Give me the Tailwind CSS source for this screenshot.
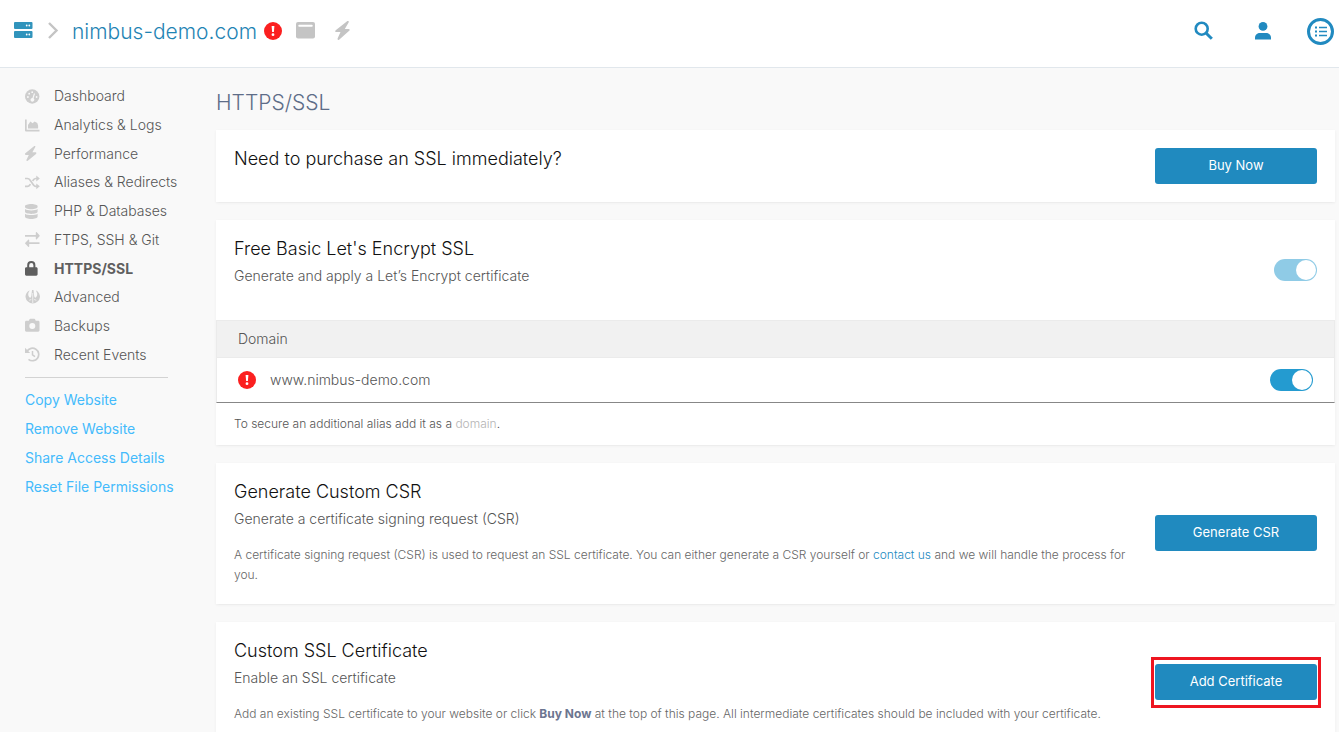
<!DOCTYPE html>
<html lang="en">
<head>
<meta charset="utf-8">
<meta name="viewport" content="width=device-width, initial-scale=1">
<title>HTTPS/SSL - nimbus-demo.com</title>
<script src="https://cdn.jsdelivr.net/npm/@tailwindcss/browser@4"></script>
</head>
<body class="h-screen overflow-y-auto [scrollbar-width:none] bg-[#f9f9f9] font-['Inter',sans-serif] text-sm font-light text-[#555]">
<header class="flex h-[68px] items-center justify-between border-b border-[#e1e7ec] bg-white pb-[6px] pl-[14px] pr-[5px]">
  <div class="flex items-center">
    <a href="#" aria-label="Servers" class="mr-[15px]">
      <svg class="h-[18px] w-[19px]" viewBox="0 0 19 18"><g fill="#3194bc"><rect width="18.500" height="7" rx="1"/><rect y="9" width="18.500" height="7" rx="1"/></g><g fill="#fff"><circle cx="12.700" cy="3.500" r=".9"/><circle cx="15.300" cy="3.500" r=".9"/><circle cx="12.700" cy="12.500" r=".9"/><circle cx="15.300" cy="12.500" r=".9"/></g></svg>
    </a>
    <svg class="mr-[13px] h-[18px] w-[11px]" viewBox="0 0 11 18" fill="none" stroke="#c4c4c4" stroke-width="2.400"><path d="M1 1 8.500 8.500 1 16"/></svg>
    <a href="#" class="mr-[7px] pt-[2px] text-[21px] leading-8 text-[#1f84b4]">nimbus-demo.com</a>
    <svg class="mr-[14px] size-[18px]" viewBox="0 0 18 18" role="img" aria-label="Warning"><circle cx="9" cy="9" r="9" fill="#fb2020"/><path d="M7.600 4h2.800l-.5 6H8.100z" fill="#fff"/><circle cx="9" cy="12.700" r="1.400" fill="#fff"/></svg>
    <button type="button" aria-label="Open site" class="mr-[20px]"><svg class="h-[17px] w-[19px]" viewBox="0 0 19 17"><rect width="19" height="16.500" rx="2" fill="#c4c4c4"/><rect x="2.500" y="2.800" width="14" height="2" rx=".5" fill="#fff"/></svg></button>
    <button type="button" aria-label="Cache"><svg class="h-[19px] w-[15px]" viewBox="0 0 15 19" fill="#c4c4c4"><path d="M12.100.2.700 9.200c-.9.800-.4 1.900.6 1.900h4.200L2.700 17.300c-.5 1.300.7 2.100 1.700 1.200l9.800-8.700c.9-.8.400-1.900-.7-1.900H9.800L13.600 1.400C14.200.2 13.100-.6 12.100.2z"/></svg></button>
  </div>
  <div class="flex items-center">
    <button type="button" aria-label="Search" class="mr-[42px]"><svg class="size-[19px]" viewBox="0 0 19 19" fill="none" stroke="#218ac0" stroke-width="2.600"><circle cx="7.700" cy="7.700" r="6"/><path d="m12 12 5.800 5.800" stroke-width="3"/></svg></button>
    <button type="button" aria-label="Account" class="mr-[36px]"><svg class="h-[18px] w-4" viewBox="0 0 16 18" fill="#218ac0"><circle cx="8" cy="4.400" r="4.400"/><path d="M0 17.500V16c0-3.300 2.300-5 5-5h6c2.700 0 5 1.700 5 5v1.500z"/></svg></button>
    <button type="button" aria-label="Menu"><svg class="h-7 w-[27px]" viewBox="0 0 27 28" fill="none" stroke="#218ac0"><circle cx="13.500" cy="14.500" r="12" stroke-width="3"/><path d="M8 10.500h2m-2 4h2m-2 4h2" stroke-width="2"/><path d="M12 10.500h8m-8 4h8m-8 4h8" stroke-width="1.500"/></svg></button>
  </div>
</header>

<div class="flex">
  <aside class="w-[216px] shrink-0 pl-[25px] pt-[14px]">
    <nav aria-label="Site">
      <ul class="grid h-[287px] auto-rows-fr">
        <li><a href="#" class="flex h-full items-center gap-[14px]"><svg class="size-[15px] text-[#cecece]" viewBox="0 0 15 15" fill="currentColor"><circle cx="7.200" cy="7.500" r="7.200"/><g fill="#f9f9f9"><circle cx="2.900" cy="8" r=".9"/><circle cx="4.200" cy="4.700" r=".9"/><circle cx="7.200" cy="3.200" r=".9"/><circle cx="11.600" cy="8" r=".9"/><path d="M9 4.300 10 4.700 8.600 9.300a1.900 1.900 0 1 1-1.200-.4z"/></g></svg>Dashboard</a></li>
        <li><a href="#" class="flex h-full items-center gap-[14px]"><svg class="size-[15px] text-[#cecece]" viewBox="0 0 15 15" fill="currentColor"><path d="M0 1.500h1.700v10.300H14.500v1.700H1a1 1 0 0 1-1-1zM3 10.500V7l2.400-3.600 2.200 1.800 2-1.800 2.700 1.500.8 2.500v3.100z"/></svg>Analytics &amp; Logs</a></li>
        <li><a href="#" class="flex h-full items-center gap-[14px]"><svg class="size-[15px] text-[#cecece]" viewBox="0 0 15 15" fill="currentColor"><path d="M9 .2.300 7.200c-.7.600-.3 1.700.5 1.700h3L1.500 13.800c-.4 1 .6 1.600 1.300 1L11 7.900c.7-.7.300-1.700-.5-1.700H7.400L10.300 1.100C10.700.2 9.800-.4 9 .2z"/></svg>Performance</a></li>
        <li><a href="#" class="flex h-full items-center gap-[14px]"><svg class="size-[15px] text-[#cecece]" viewBox="0 0 15 15" fill="none" stroke="currentColor" stroke-width="1.700"><path d="M0 3.500h2.500c1 0 1.700.4 2.300 1.300L8.500 10c.6.900 1.200 1.300 2.300 1.300H12M0 11.300h2.500c1 0 1.700-.4 2.300-1.300l.6-.9M7.600 6l.9-1.200c.6-.9 1.200-1.300 2.300-1.300H12"/><path d="m11.300.6 3.500 2.900-3.500 2.900zm0 7.800 3.500 2.900-3.500 2.900z" fill="currentColor" stroke="none"/></svg>Aliases &amp; Redirects</a></li>
        <li><a href="#" class="flex h-full items-center gap-[14px]"><svg class="size-[15px] text-[#cecece]" viewBox="0 0 15 15" fill="currentColor"><path d="M0 2.200C0 1 2.700 0 6.300 0s6.300 1 6.300 2.200v.9c0 1.200-2.700 2.200-6.300 2.200S0 4.300 0 3.100zM0 5c1.300 1 3.700 1.400 6.300 1.400s5-.4 6.300-1.400v2.800c0 1.200-2.700 2.100-6.300 2.100S0 9 0 7.800zm0 4.700c1.300 1 3.700 1.400 6.300 1.400s5-.4 6.300-1.400v3.100c0 1.200-2.700 2.200-6.300 2.200S0 14 0 12.800z"/></svg>PHP &amp; Databases</a></li>
        <li><a href="#" class="flex h-full items-center gap-[14px]"><svg class="size-[15px] text-[#cecece]" viewBox="0 0 15 15" fill="currentColor"><path d="M0 3h10.800V.8c0-.6.600-.9 1-.5L14.500 3.300c.3.300.3.700 0 1L11.800 7.200c-.4.400-1 .1-1-.5V4.700H0zM14.500 12H4.200v2.200c0 .6-.6.900-1 .5L.3 11.700a.7.700 0 0 1 0-1L3.200 7.800c.4-.4 1-.1 1 .5v2H14.500z"/></svg>FTPS, SSH &amp; Git</a></li>
        <li><a href="#" aria-current="page" class="flex h-full items-center gap-[14px] font-bold text-[#5f5f5f]"><svg class="size-[15px]" viewBox="0 0 15 15" fill="currentColor"><path d="M2.200 6.300V4.200a4.100 4.100 0 0 1 8.200 0v2.100h.9c.8 0 1.300.6 1.300 1.400v5.600c0 .8-.6 1.400-1.300 1.400h-10C.6 14.700 0 14.100 0 13.300V7.700c0-.8.600-1.400 1.300-1.400zm2 0h4.200V4.200a2.100 2.100 0 0 0-4.200 0z"/></svg>HTTPS/SSL</a></li>
        <li><a href="#" class="flex h-full items-center gap-[14px]"><svg class="size-[15px] text-[#cecece]" viewBox="0 0 15 15" fill="currentColor"><path d="M4.700.4C2.800.8.500 3.500.5 7a7.300 7.300 0 0 0 14.500 0c0-3.500-2.300-6.200-4.200-6.600 2.300 3 1.800 6.300-.8 7.400L9.200 6.300 8.500 0H7l-.7 6.300-.8 1.500C2.900 6.700 2.400 3.400 4.700.4z"/><path d="M4.200 10.300 6.300 9.500m5 .8-2.100-.8M7.750 3v10" fill="none" stroke="#f9f9f9" stroke-width=".8"/></svg>Advanced</a></li>
        <li><a href="#" class="flex h-full items-center gap-[14px]"><svg class="size-[15px] text-[#cecece]" viewBox="0 0 15 15" fill="currentColor"><path fill-rule="evenodd" d="M1.400 2.800h2.500l.5-1.300c.2-.5.500-.7 1-.7h3.800c.5 0 .8.200 1 .7l.5 1.300h2.500c.8 0 1.300.6 1.300 1.400v8.100c0 .8-.6 1.400-1.300 1.400H1.400c-.8 0-1.400-.6-1.400-1.400V4.200c0-.8.600-1.400 1.400-1.400zM7.300 5a3 3 0 1 0 0 6 3 3 0 0 0 0-6z"/></svg>Backups</a></li>
        <li><a href="#" class="flex h-full items-center gap-[14px]"><svg class="size-[15px] text-[#cecece]" viewBox="0 0 15 15" fill="none" stroke="currentColor" stroke-width="1.700"><path d="M2 4.200A6.300 6.300 0 1 1 3.500 12.400"/><path d="M7.500 4v3.800l2.500 1.800" stroke-width="1.500"/><path d="M0 .7v5.200h5.200z" fill="currentColor" stroke="none"/></svg>Recent Events</a></li>
      </ul>
      <hr class="mt-2 mr-12 border-[#d3d3d3]">
      <ul class="mt-2 grid h-[115px] auto-rows-fr font-normal text-[#44bbfc]">
        <li><a href="#" class="flex h-full items-center">Copy Website</a></li>
        <li><a href="#" class="flex h-full items-center">Remove Website</a></li>
        <li><a href="#" class="flex h-full items-center">Share Access Details</a></li>
        <li><a href="#" class="flex h-full items-center whitespace-nowrap">Reset File Permissions</a></li>
      </ul>
    </nav>
  </aside>

  <main class="flex min-w-0 grow flex-col gap-[18px] pr-1">
    <h1 class="-mb-[18px] pt-[19px] pb-[11px] text-[21px] leading-8 text-[#5e6d88]">HTTPS/SSL</h1>

    <section class="flex justify-between bg-white p-[18px] shadow-sm shadow-black/5">
      <h2 class="text-lg leading-[22px] text-[#111]">Need to purchase an SSL immediately?</h2>
      <button type="button" class="h-9 w-[162px] shrink-0 rounded-[3px] bg-[#208abf] pb-[2px] text-[13px] font-normal text-white">Buy Now</button>
    </section>

    <section class="bg-white shadow-sm shadow-black/5">
      <div class="flex h-[100px] items-center justify-between px-[18px]">
        <div class="self-start pt-[18px]">
          <h2 class="text-lg leading-[22px] text-[#111]">Free Basic Let's Encrypt SSL</h2>
          <p class="mt-1 leading-6">Generate and apply a Let’s Encrypt certificate</p>
        </div>
        <input type="checkbox" role="switch" checked disabled aria-label="Let's Encrypt certificate" class="h-[22px] w-[43px] appearance-none rounded-full bg-[#8fcbe6] before:ml-auto before:mr-px before:mt-px before:block before:size-5 before:rounded-full before:bg-white">
      </div>
      <table class="w-full border-separate border-spacing-0 border-x border-b border-x-[#ebebeb] border-b-[#878787]">
        <thead><tr><th scope="col" colspan="2" class="h-[38px] border-y border-[#ebebeb] bg-[#f1f1f1] pl-[21px] text-left font-light">Domain</th></tr></thead>
        <tbody><tr>
          <td class="h-11 pl-[21px]"><div class="flex items-center gap-[14px]"><svg class="size-[18px]" viewBox="0 0 18 18" role="img" aria-label="Warning"><circle cx="9" cy="9" r="9" fill="#fb2020"/><path d="M7.600 4h2.800l-.5 6H8.100z" fill="#fff"/><circle cx="9" cy="12.700" r="1.400" fill="#fff"/></svg><span>www.nimbus-demo.com</span></div></td>
          <td class="pr-[21px]"><input type="checkbox" role="switch" checked aria-label="SSL for www.nimbus-demo.com" class="ml-auto block h-[22px] w-[43px] appearance-none rounded-full bg-[#249bd0] before:ml-auto before:mr-px before:mt-px before:block before:size-5 before:rounded-full before:bg-white"></td>
        </tr></tbody>
      </table>
      <p class="px-[18px] pt-[11px] pb-[11px] text-xs leading-5">To secure an additional alias add it as a <a href="#" class="text-[#b4b4b4]">domain</a>.</p>
    </section>

    <section class="flex items-center justify-between gap-[18px] bg-white px-[18px] shadow-sm shadow-black/5">
      <div class="pt-[18px] pb-[19px]">
        <h2 class="text-lg leading-[22px] text-[#111]">Generate Custom CSR</h2>
        <p class="mt-1 leading-6">Generate a certificate signing request (CSR)</p>
        <p class="mt-[14px] text-xs leading-5 text-[#666]">A certificate signing request (CSR) is used to request an SSL certificate. You can either generate a CSR yourself or <a href="#" class="text-[#208abf]">contact us</a> and we will handle the process for you.</p>
      </div>
      <div class="shrink-0 pb-px">
        <button type="button" class="block h-9 w-[162px] rounded-[3px] bg-[#208abf] pb-[2px] text-[13px] font-normal text-white">Generate CSR</button>
      </div>
    </section>

    <section class="flex items-center justify-between gap-[18px] bg-white px-[18px] shadow-sm shadow-black/5">
      <div class="pt-[18px] pb-[19px]">
        <h2 class="text-lg leading-[22px] text-[#111]">Custom SSL Certificate</h2>
        <p class="mt-1 leading-6">Enable an SSL certificate</p>
        <p class="mt-[14px] text-xs leading-5 text-[#666]">Add an existing SSL certificate to your website or click <strong class="font-bold text-[#6c7590]">Buy Now</strong> at the top of this page. All intermediate certificates should be included with your certificate.</p>
      </div>
      <div class="shrink-0 pb-px">
        <div class="relative">
          <button type="button" class="block h-9 w-[162px] rounded-[3px] bg-[#208abf] pb-[2px] text-[13px] font-normal text-white">Add Certificate</button>
          <div class="pointer-events-none absolute -inset-x-1 -top-[7px] -bottom-2 border-3 border-[#ee1520]"></div>
        </div>
      </div>
    </section>
  </main>
</div>
</body>
</html>
